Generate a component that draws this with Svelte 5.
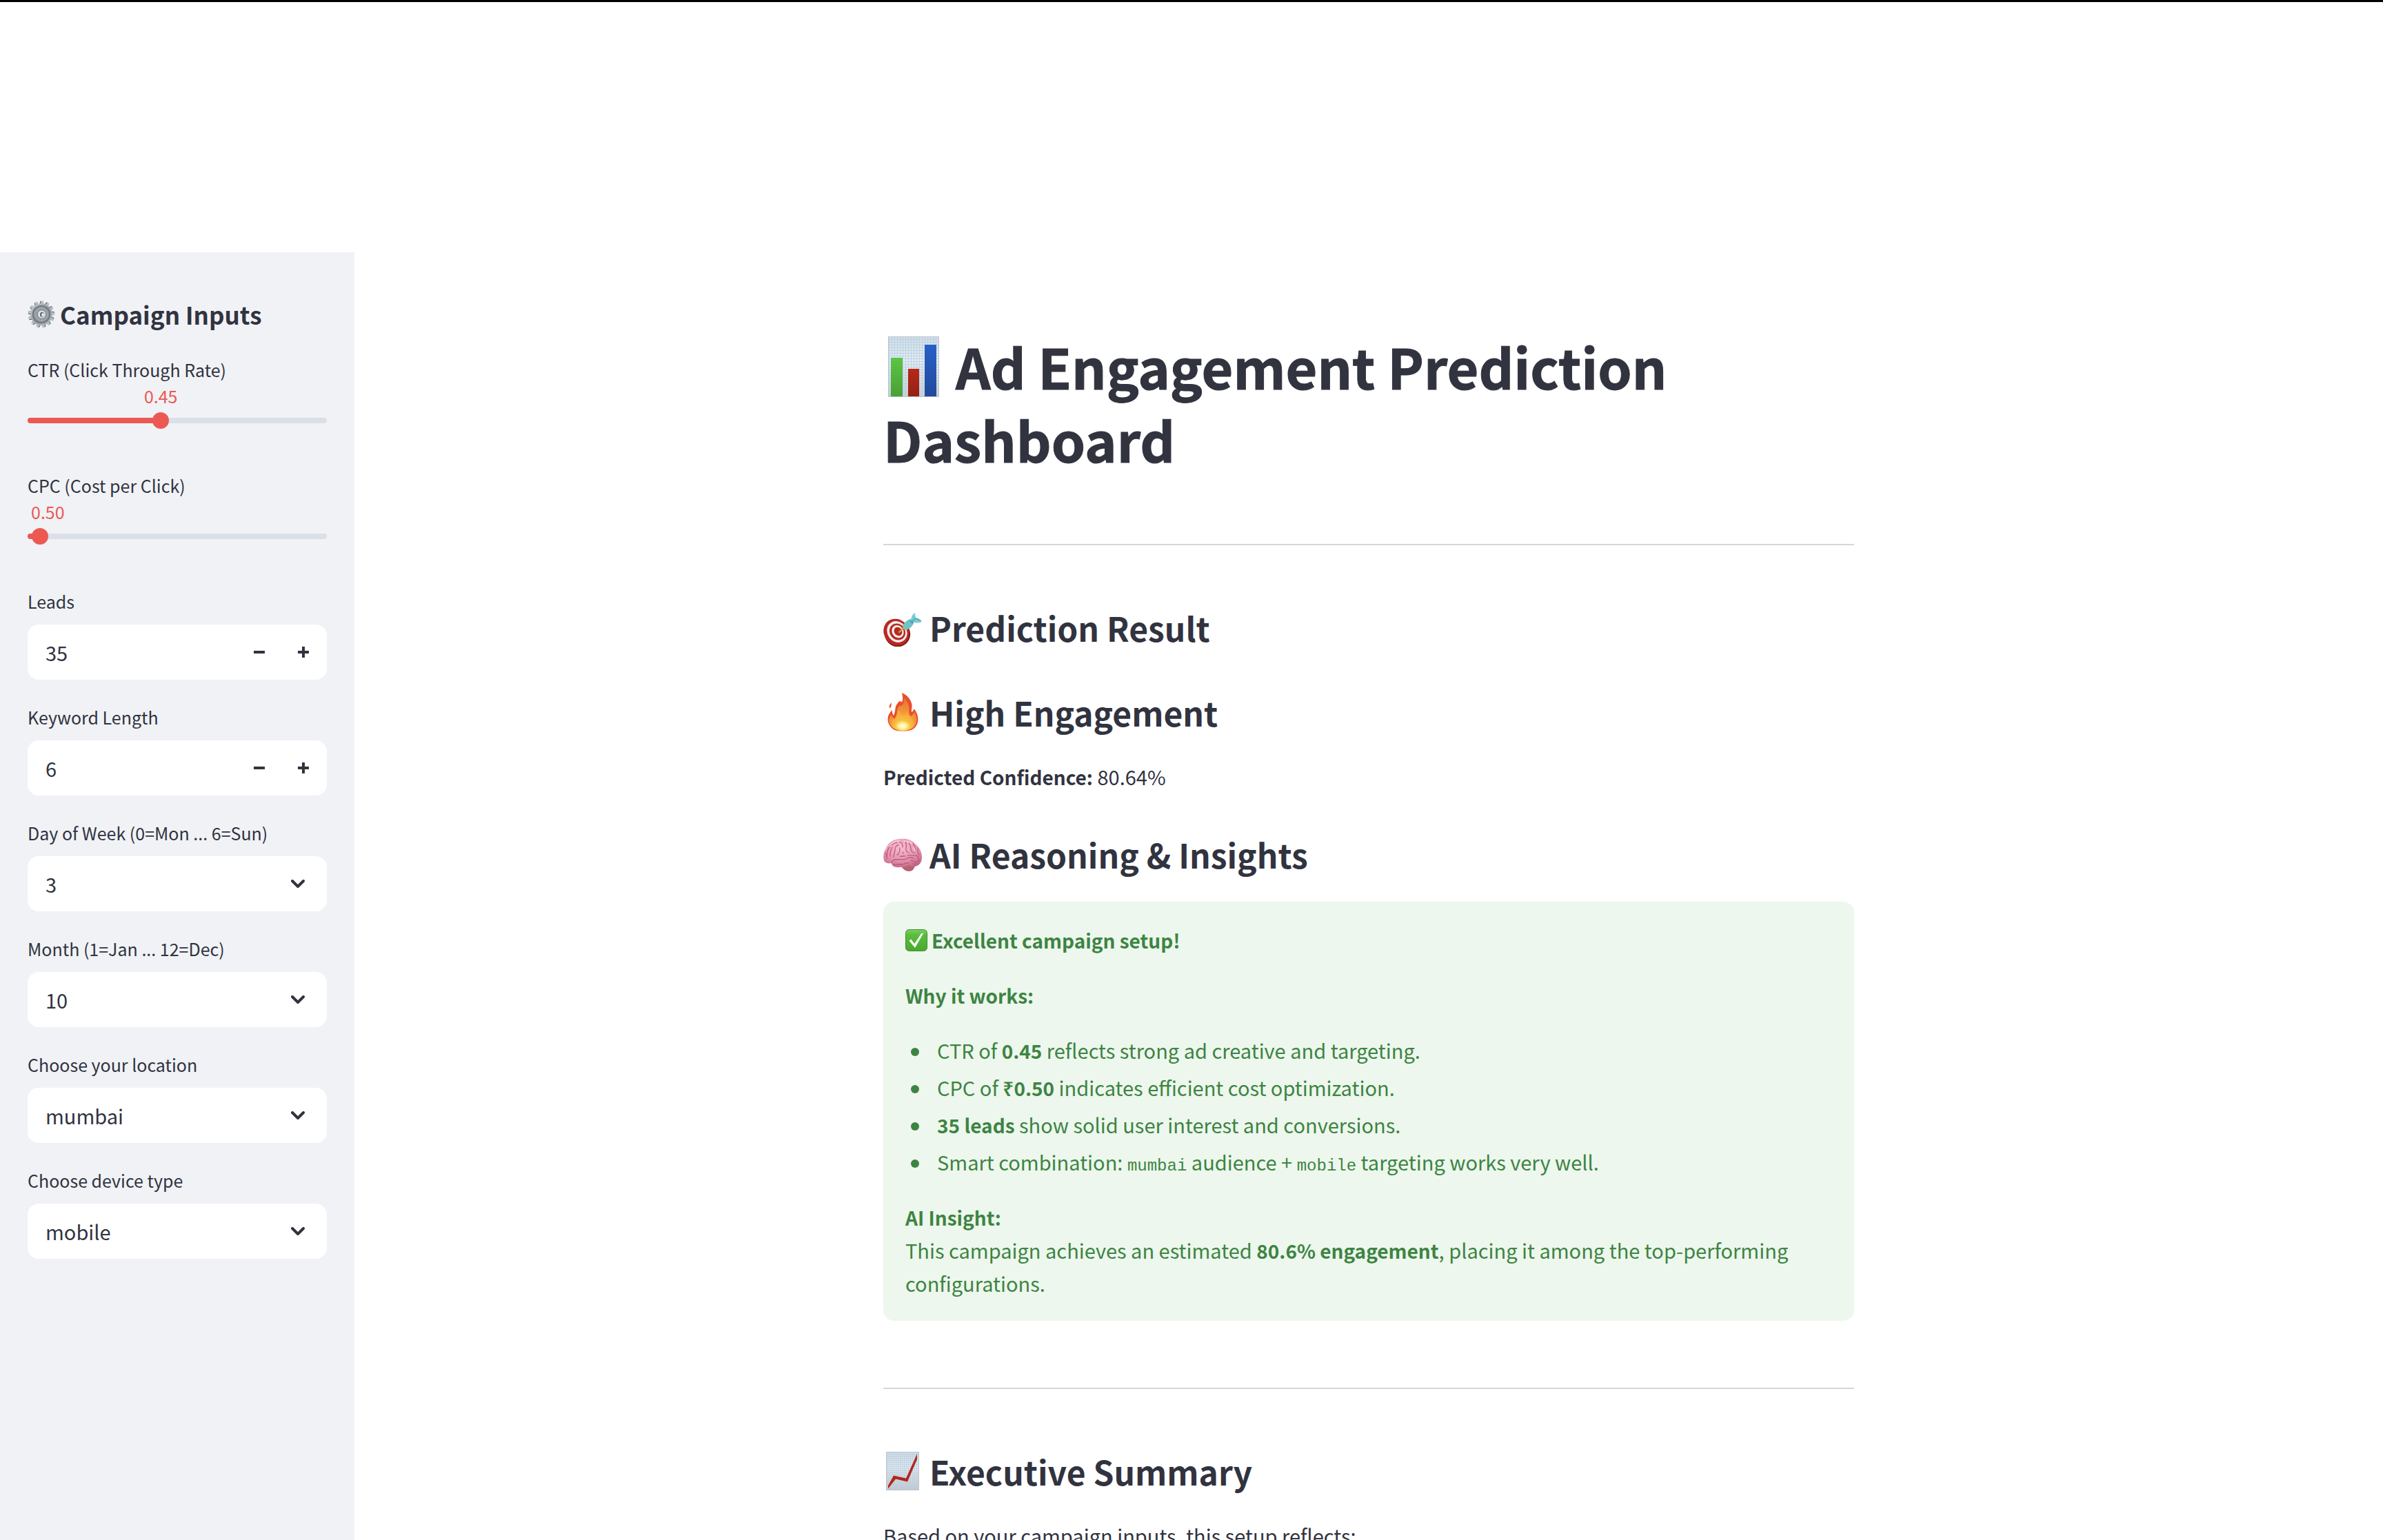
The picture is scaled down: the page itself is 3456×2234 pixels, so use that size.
<script>
  let sliders = $state([
    { id: 'ctr', label: 'CTR (Click Through Rate)', min: 0.01, max: 1, value: 0.45 },
    { id: 'cpc', label: 'CPC (Cost per Click)', min: 0.1, max: 10, value: 0.5 }
  ]);
  let numbers = $state([
    { id: 'leads', label: 'Leads', value: 35 },
    { id: 'keyword', label: 'Keyword Length', value: 6 }
  ]);
  let selects = $state([
    { id: 'day', label: 'Day of Week (0=Mon ... 6=Sun)', value: '3', options: ['0', '1', '2', '3', '4', '5', '6'] },
    { id: 'month', label: 'Month (1=Jan ... 12=Dec)', value: '10', options: ['1', '2', '3', '4', '5', '6', '7', '8', '9', '10', '11', '12'] },
    { id: 'location', label: 'Choose your location', value: 'mumbai', options: ['mumbai', 'delhi', 'bangalore'] },
    { id: 'device', label: 'Choose device type', value: 'mobile', options: ['mobile', 'desktop', 'tablet'] }
  ]);
  const percent = (s) => ((s.value - s.min) / (s.max - s.min)) * 100;
  const teeth = Array.from({ length: 13 }, (_, i) => (i * 360) / 13 + 4);
</script>

<div class="app">
  <header class="topbar"></header>
  <div class="layout">
    <aside class="sidebar">
      <h2>
        <svg class="gear" viewBox="0 0 40 40" aria-hidden="true">
          <defs>
            <linearGradient id="steel" x1="0" y1="0" x2="1" y2="1">
              <stop offset="0" stop-color="#c3ccd4" />
              <stop offset="0.5" stop-color="#98a0a6" />
              <stop offset="1" stop-color="#b4babf" />
            </linearGradient>
          </defs>
          {#each teeth as a}
            <path d="M17 6 L18 0.8 H21.4 L23 6 Z" fill="#5c5953" transform="rotate({a} 20 20) translate(-0.8 0.2)" />
            <path d="M17.2 6 L18.4 0.6 H21.6 L23 6 Z" fill="#b6c0c8" transform="rotate({a} 20 20)" />
          {/each}
          <circle cx="20" cy="20" r="15.6" fill="url(#steel)" />
          <circle cx="20" cy="20" r="12.4" fill="#868e93" stroke="#6a7074" stroke-width="1.4" />
          <circle cx="20" cy="20" r="9.6" fill="#98a1a7" stroke="#a9b1b6" stroke-width="1" />
          <circle cx="20.5" cy="20" r="6.2" fill="#dbe2e8" stroke="#737a7f" stroke-width="1" />
          <ellipse cx="21" cy="20.2" rx="3" ry="3.5" fill="#625f5b" />
          <ellipse cx="22" cy="20.6" rx="1.8" ry="2.6" fill="#f0f2f6" />
        </svg>Campaign Inputs
      </h2>

      {#each sliders as s}
        <div class="field slider">
          <label for={s.id}>{s.label}</label>
          <output for={s.id} style="--pos: {percent(s)}%">{s.value.toFixed(2)}</output>
          <div class="rail">
            <div class="track"><div class="fill" style="width: {percent(s)}%"></div></div>
            <input id={s.id} type="range" min={s.min} max={s.max} step="0.01" bind:value={s.value} />
          </div>
        </div>
      {/each}

      {#each numbers as n}
        <div class="field">
          <label for={n.id}>{n.label}</label>
          <div class="box number">
            <input id={n.id} type="number" bind:value={n.value} />
            <button type="button" aria-label="Decrease {n.label}" onclick={() => n.value--}>
              <svg viewBox="0 0 16 16" aria-hidden="true"><path d="M0 6h16v4H0z" /></svg>
            </button>
            <button type="button" aria-label="Increase {n.label}" onclick={() => n.value++}>
              <svg viewBox="0 0 16 16" aria-hidden="true"><path d="M6 0h4v6h6v4h-6v6H6v-6H0V6h6z" /></svg>
            </button>
          </div>
        </div>
      {/each}

      {#each selects as s}
        <div class="field">
          <label for={s.id}>{s.label}</label>
          <div class="box choice">
            <select id={s.id} bind:value={s.value}>
              {#each s.options as o}<option value={o}>{o}</option>{/each}
            </select>
            <svg class="chevron" viewBox="0 0 20 12" aria-hidden="true"><path d="M2 2l8 8 8-8" /></svg>
          </div>
        </div>
      {/each}
    </aside>

    <main>
      <div class="content">
        <h1>
          <svg class="title-icon" viewBox="0 0 88 88" aria-hidden="true">
            <defs>
              <linearGradient id="paper" x1="0" y1="0" x2="0" y2="1">
                <stop offset="0" stop-color="#d3dde5" />
                <stop offset="0.4" stop-color="#e6edf2" />
                <stop offset="1" stop-color="#cbcfd3" />
              </linearGradient>
              <pattern id="grid" width="4" height="4" patternUnits="userSpaceOnUse">
                <path d="M0 0.5H4M0.5 0V4" stroke="#b3cfe4" stroke-width="0.8" fill="none" />
              </pattern>
              <linearGradient id="bar-green" x1="0" y1="0" x2="0" y2="1"><stop offset="0" stop-color="#5cc544" /><stop offset="1" stop-color="#4a9f36" /></linearGradient>
              <linearGradient id="bar-red" x1="0" y1="0" x2="0" y2="1"><stop offset="0" stop-color="#b8281b" /><stop offset="1" stop-color="#952014" /></linearGradient>
              <linearGradient id="bar-blue" x1="0" y1="0" x2="0" y2="1"><stop offset="0" stop-color="#2860c8" /><stop offset="1" stop-color="#21499b" /></linearGradient>
            </defs>
            <rect x="7" y="0" width="74" height="88" fill="url(#paper)" />
            <rect x="7" y="0" width="74" height="88" fill="url(#grid)" />
            <rect x="7.5" y="0.5" width="73" height="87" fill="none" stroke="#bcc4ca" />
            <rect x="11" y="31" width="17" height="56" fill="url(#bar-green)" />
            <rect x="36" y="47" width="16" height="40" fill="url(#bar-red)" />
            <rect x="60" y="12" width="17" height="75" fill="url(#bar-blue)" />
          </svg>Ad Engagement Prediction Dashboard
        </h1>
        <hr />

        <h3>
          <svg class="head-icon" viewBox="0 0 56 56" aria-hidden="true">
            <ellipse cx="20.5" cy="37.5" rx="18.5" ry="19" transform="rotate(-35 20.5 37.5)" fill="#7d1a16" />
            <ellipse cx="19" cy="35" rx="18" ry="20" transform="rotate(-35 19 35)" fill="#b72a22" />
            <ellipse cx="20" cy="34.5" rx="14" ry="16" transform="rotate(-35 20 34.5)" fill="#f3eeee" />
            <ellipse cx="20.5" cy="34.5" rx="11" ry="12.6" transform="rotate(-35 20.5 34.5)" fill="#b72a22" />
            <ellipse cx="21" cy="34.2" rx="8.2" ry="9.6" transform="rotate(-35 21 34.2)" fill="#f3eeee" />
            <ellipse cx="21.5" cy="34" rx="5.6" ry="6.6" transform="rotate(-35 21.5 34)" fill="#b72a22" />
            <path d="M23 35l9-8" stroke="#d4a92f" stroke-width="2.2" stroke-linecap="round" />
            <path d="M27 24l3-1 5 6-1 3-4-1z" fill="#e0b93a" />
            <path d="M28 28c1-6 6-11 12-12l4 5c-1 6-6 10-12 10.500z" fill="#6fc3ca" />
            <path d="M38 18l6-3 1 5-3 3z" fill="#4a9aa3" />
            <path d="M40 19c0-5 2-10 6-12 0 4 1 6 1.500 8 3-1 6 1 8 5-4 2-8 2-13 0z" fill="#79cdd2" />
            <path d="M41 20l6-5 8 4" fill="none" stroke="#4b9fa8" stroke-width="1.2" />
          </svg>Prediction Result
        </h3>
        <h3>
          <svg class="head-icon" viewBox="0 0 56 56" aria-hidden="true">
            <defs>
              <radialGradient id="flame" cx="0.5" cy="0.92" r="0.9">
                <stop offset="0" stop-color="#fff9ba" />
                <stop offset="0.22" stop-color="#fbd84b" />
                <stop offset="0.5" stop-color="#f39c38" />
                <stop offset="1" stop-color="#e96c35" />
              </radialGradient>
              <radialGradient id="glow"><stop offset="0" stop-color="#fffde0" /><stop offset="0.5" stop-color="#fff29a" /><stop offset="1" stop-color="#fbd84b" stop-opacity="0" /></radialGradient>
            </defs>
            <path d="M12 14.500c-3 2-4 5-3 8 2-1 3-4 3-8z" fill="#e8542f" />
            <path d="M27 0c7 3 13 9 14.500 17 .5 4-1 8-.5 11 2-1 3-3 3.500-5 4 5 6 10 6 16-.5 8-5 13-10 15-8 2-17 2-24 0-6-3-10-9-10-16 0-5 3-9 6-13 .5 4 1 6 2.500 8 2-4 2-8 3-13 1.500-4 4-7 6-8 1 0 2 .5 3 1.500C29 9 28 5 27 0z" fill="#e84f2e" />
            <path d="M30 7c5 5 8 11 7.500 17-.5 5 0 8 2.500 10 2-1 4-3 5-6 3 5 4 10 3 14-2 8-7 12-20 13-13-1-18-6-19.500-13-.5-4 1-7 3-10 1 3 3 5 5 6 3-3 3-9 4-14 1-4 3-5 4.500-5 4 0 5-7 5-12z" fill="url(#flame)" />
            <path d="M22 25c4 3 4 9 7 11 3-2 4-6 6-9 1 5 5 9 8 13 1 7-5 14-15 15-10-1-16-7-15-14 3-3 6-5 9-16z" fill="#f8b63c" opacity="0.6" />
            <ellipse cx="28" cy="48" rx="12" ry="8.5" fill="url(#glow)" />
          </svg>High Engagement
        </h3>
        <p><strong>Predicted Confidence:</strong> 80.64%</p>

        <h3 class="spaced">
          <svg class="head-icon" viewBox="0 0 56 56" aria-hidden="true">
            <defs>
              <radialGradient id="brain" cx="0.45" cy="0.3" r="0.75">
                <stop offset="0" stop-color="#f6bdd0" />
                <stop offset="0.6" stop-color="#e793b0" />
                <stop offset="1" stop-color="#c06684" />
              </radialGradient>
            </defs>
            <path d="M25 43c2 6 7 10 12 10 5 0 8-3 9-9z" fill="#b9626e" />
            <path d="M2 39c-3-6-2-14 2-19C7 11 15 6 25 6c8-1 16 1 21 7 6 4 10 12 10 19 0 6-2 11-7 13-4 2-8 2-12-1-4 3-9 3-14 3-6 1-11-2-11-6-4 1-8 0-10-2z" fill="url(#brain)" />
            <g fill="none" stroke="#b95d80" stroke-width="1.3" stroke-linecap="round">
              <path d="M12 41c1-4 4-6 8-5 5-1 9 1 13-1 4-3 7-3 11-1" />
              <path d="M14 43c5 1 10-1 14 0 3-1 5-3 9-2" />
              <path d="M5 32c1-5 0-10 4-14M10 31c-1-5 1-9 3-13M15 32c0-4 2-6 2-10s2-7 5-7" />
              <path d="M20 29c4-1 4-6 4-10M10 15c4-1 6-4 10-4M23 10c3 1 5 2 5 6s-1 8 1 11M33 8c-2 4 2 6 0 10-1 4 1 7 4 8" />
              <path d="M38 11c-1 4 3 6 2 10 0 3 3 5 5 5M43 12c1 4 4 6 4 10M50 20c0 4-1 6 2 9M35 30c4-2 8 1 11 0 3-1 5 2 5 5" />
              <path d="M24 31c3 1 5-1 8 0M40 37c3 0 4 3 7 2s5 0 5-3M43 42c2 1 4 0 5-1M3 26c2 2 1 5 3 8" />
            </g>
            <path d="M9 16c4-5 9-7 15-7M30 9c5 0 9 1 12 4M28 19v5M44 18c1 2 2 3 2 5" fill="none" stroke="#fbd6e2" stroke-width="1.4" stroke-linecap="round" />
          </svg>AI Reasoning &amp; Insights
        </h3>

        <section class="alert">
          <p>
            <svg class="check" viewBox="0 0 32 32" aria-hidden="true">
              <defs>
                <linearGradient id="tick" x1="0" y1="0" x2="0" y2="1"><stop offset="0" stop-color="#7fcf63" /><stop offset="0.25" stop-color="#58be3c" /><stop offset="1" stop-color="#4aa82f" /></linearGradient>
              </defs>
              <rect x="0.5" y="0.5" width="31" height="31" rx="5" fill="url(#tick)" stroke="#3f8f35" />
              <path d="M5.500 16.500l2.700-2 5 6.500L23.200 6h2.900L14 27z" fill="#fff" />
            </svg><strong>Excellent campaign setup!</strong>
          </p>
          <p><strong>Why it works:</strong></p>
          <ul>
            <li>CTR of <strong>0.45</strong> reflects strong ad creative and targeting.</li>
            <li>CPC of <strong>₹0.50</strong> indicates efficient cost optimization.</li>
            <li><strong>35 leads</strong> show solid user interest and conversions.</li>
            <li>Smart combination: <code>mumbai</code> audience + <code>mobile</code> targeting works very well.</li>
          </ul>
          <p>
            <strong>AI Insight:</strong><br />
            This campaign achieves an estimated <strong>80.6% engagement</strong>, placing it among the top-performing configurations.
          </p>
        </section>
        <hr />

        <h3>
          <svg class="head-icon" viewBox="0 0 56 56" aria-hidden="true">
            <defs>
              <linearGradient id="sheet" x1="0" y1="0" x2="0" y2="1">
                <stop offset="0" stop-color="#cfdbe4" />
                <stop offset="0.4" stop-color="#e0e8ee" />
                <stop offset="1" stop-color="#c3c8cd" />
              </linearGradient>
              <pattern id="fine" width="3" height="3" patternUnits="userSpaceOnUse">
                <path d="M0 0.5H3M0.5 0V3" stroke="#b5cde0" stroke-width="0.6" fill="none" />
              </pattern>
            </defs>
            <rect x="4" y="0" width="48" height="56" fill="url(#sheet)" />
            <rect x="4" y="0" width="48" height="56" fill="url(#fine)" />
            <rect x="4.5" y="0.5" width="47" height="55" fill="none" stroke="#bcc5cc" />
            <path d="M7 49L15 34.500l18 4L49 3v8L35 43.500 18 39.500 7 53.500z" fill="#b3261b" />
          </svg>Executive Summary
        </h3>
        <p>Based on your campaign inputs, this setup reflects:</p>
      </div>
    </main>
  </div>
</div>

<style>
  :global(body) {
    background: #fff;
  }
  .app {
    display: flex;
    flex-direction: column;
    height: 100vh;
    color: #31333f;
    font-family: "Noto Sans CJK SC", "Noto Sans", sans-serif;
    font-size: 29px;
    line-height: 48px;
  }
  .app *,
  .app {
    box-sizing: border-box;
  }
  .topbar {
    flex: none;
    height: 366px;
    border-top: 3px solid #000;
  }
  .layout {
    display: flex;
    flex: 1;
    min-height: 0;
  }
  h1,
  h2,
  h3,
  p,
  ul {
    margin: 0;
  }
  h1 svg,
  h2 svg,
  h3 svg,
  .check {
    display: inline-block;
  }

  .sidebar {
    display: flex;
    flex: none;
    flex-direction: column;
    gap: 32px;
    width: 514px;
    padding: 66px 40px;
    overflow: hidden;
    background: #f0f2f6;
  }
  .sidebar h2 {
    font-size: 35px;
    font-weight: 600;
    line-height: 48px;
    margin-bottom: 2px;
  }
  .gear {
    width: 40px;
    height: 40px;
    margin-right: 7px;
    vertical-align: -5px;
  }
  .field {
    display: flex;
    flex: none;
    flex-direction: column;
  }
  .field label {
    height: 56px;
    font-size: 25px;
    line-height: 44px;
  }
  .slider {
    height: 136px;
  }
  .slider label {
    height: 44px;
  }
  .slider output {
    margin-left: max(5px, calc(var(--pos) - 24px));
    color: #ec5953;
    font-size: 25px;
    line-height: 32px;
  }
  .rail {
    display: grid;
    align-items: center;
    height: 40px;
  }
  .track,
  .rail input {
    grid-area: 1 / 1;
  }
  .track {
    height: 8px;
    overflow: hidden;
    border-radius: 4px;
    background: #dbdfe8;
  }
  .fill {
    height: 100%;
    background: #ec5953;
  }
  .rail input {
    appearance: none;
    height: 24px;
    margin: 0 -12px;
    background: transparent;
  }
  .rail input::-webkit-slider-thumb {
    appearance: none;
    width: 24px;
    height: 24px;
    border-radius: 50%;
    background: #ec5953;
  }
  .box {
    height: 80px;
    overflow: hidden;
    border-radius: 16px;
    background: #fff;
  }
  .number {
    display: flex;
    padding-right: 2px;
  }
  .number input,
  select {
    min-width: 0;
    border: 0;
    padding: 0 0 0 26px;
    background: transparent;
    color: inherit;
    font: inherit;
    outline: none;
    appearance: none;
  }
  .number input {
    flex: 1;
    appearance: textfield;
  }
  .number input::-webkit-inner-spin-button {
    appearance: none;
    margin: 0;
  }
  .number button {
    display: flex;
    align-items: center;
    justify-content: center;
    width: 64px;
    padding: 0;
    border: 0;
    background: transparent;
    color: inherit;
  }
  .number svg {
    width: 16px;
    height: 16px;
    fill: currentColor;
  }
  .choice {
    display: grid;
    align-items: center;
  }
  .choice select,
  .chevron {
    grid-area: 1 / 1;
  }
  .choice select {
    height: 80px;
  }
  .chevron {
    justify-self: end;
    width: 20px;
    height: 12px;
    margin-right: 32px;
    fill: none;
    stroke: currentColor;
    stroke-width: 4;
    stroke-linecap: round;
    stroke-linejoin: round;
    pointer-events: none;
  }

  main {
    flex: 1;
    min-width: 0;
    overflow: hidden;
  }
  .content {
    max-width: 1408px;
    margin: 0 auto;
    padding-top: 112px;
  }
  h1 {
    padding-bottom: 2px;
    font-size: 79px;
    font-weight: 700;
    line-height: 106px;
    -webkit-text-stroke: 1px currentColor;
  }
  .title-icon {
    width: 88px;
    height: 88px;
    margin-right: 17px;
    vertical-align: -11px;
  }
  hr {
    height: 2px;
    margin: 97px 0 86px;
    border: 0;
    background: #d6d6d9;
  }
  h3 {
    margin-bottom: 35px;
    font-size: 48px;
    font-weight: 600;
    line-height: 67px;
  }
  h3 + h3,
  .spaced {
    margin-top: 56px;
  }
  .head-icon {
    width: 56px;
    height: 56px;
    margin-right: 11px;
    vertical-align: -7px;
  }
  strong {
    font-size: 28px;
    font-weight: 600;
    line-height: 1;
  }
  .alert {
    padding: 31px 32px;
    border-radius: 16px;
    background: #edf7ed;
    color: #3d8443;
  }
  .alert p + p,
  .alert ul,
  .alert ul + p {
    margin-top: 32px;
  }
  .check {
    width: 32px;
    height: 32px;
    margin-right: 6px;
    vertical-align: -4px;
  }
  ul {
    padding-left: 46px;
    list-style: none;
  }
  li::before {
    content: "";
    display: inline-block;
    width: 12px;
    height: 12px;
    margin: 0 26px 0 -38px;
    border-radius: 50%;
    background: currentColor;
    vertical-align: 4px;
  }
  li + li {
    margin-top: 6px;
  }
  code {
    font-family: "Liberation Mono", monospace;
    font-size: 24px;
    line-height: 1;
  }
</style>
